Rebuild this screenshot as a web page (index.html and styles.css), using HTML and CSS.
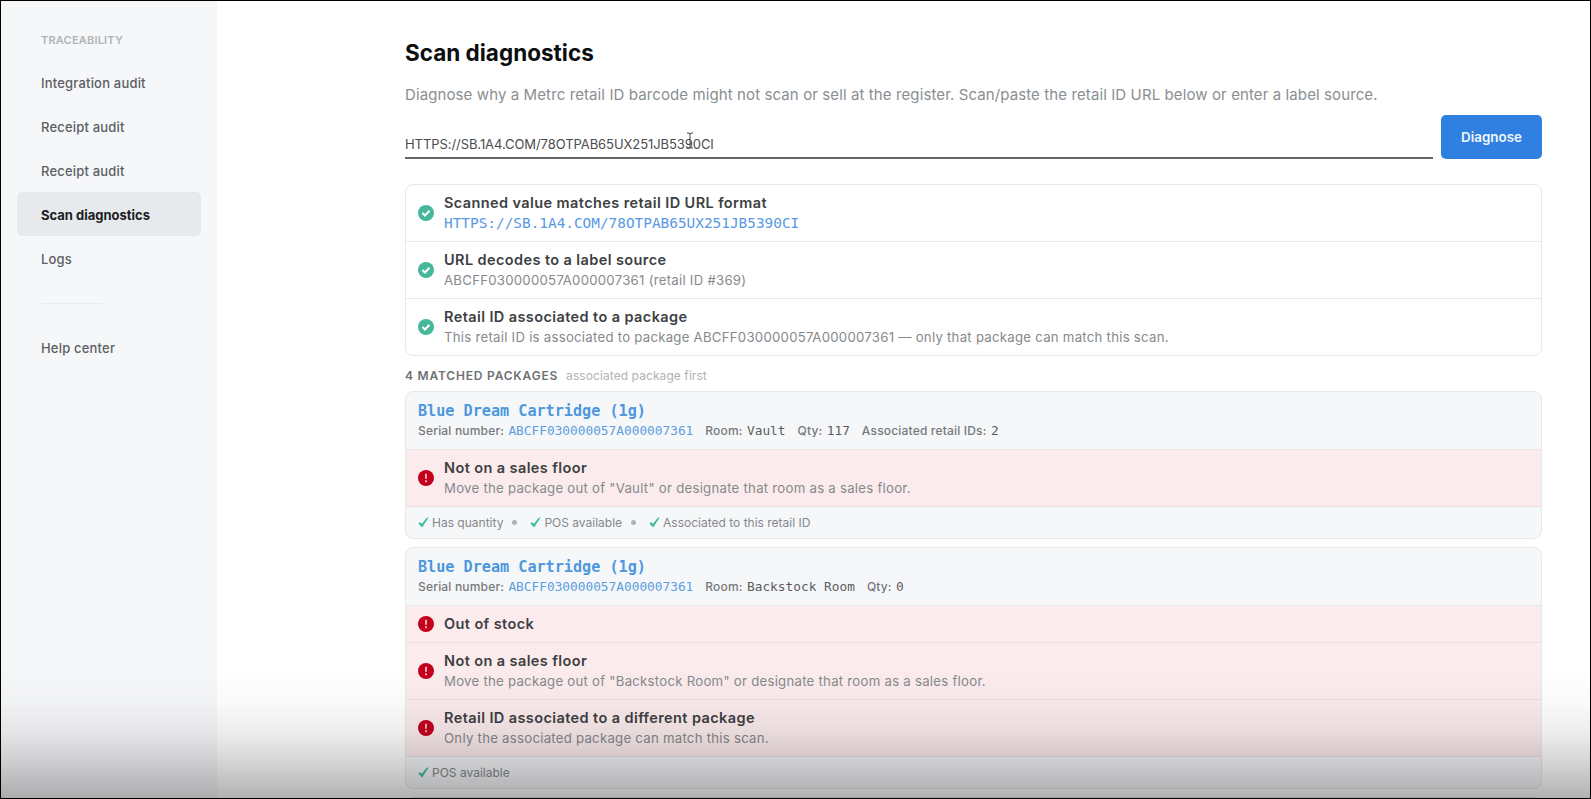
FILE: index.html
```html
<!DOCTYPE html>
<html lang="en">
<head>
    <meta charset="UTF-8">
    <meta name="viewport" content="width=device-width, initial-scale=1.0">
    <title>Scan diagnostics</title>
    <link rel="stylesheet" href="styles.css">
</head>
<body>
    <svg class="icon-defs" width="0" height="0">
        <symbol id="icon-ok" viewBox="0 0 16 16">
            <circle cx="8" cy="8" r="8" fill="#45b79a"/>
            <path d="M4.5 8.1l2.4 2.4 4.6-4.7" fill="none" stroke="#fff" stroke-width="2.1"/>
        </symbol>
        <symbol id="icon-error" viewBox="0 0 16 16">
            <circle cx="8" cy="8" r="8" fill="#c4001d"/>
            <path d="M8 3.8v5M8 10.3v1.9" fill="none" stroke="#f6cdd3" stroke-width="1.7"/>
        </symbol>
        <symbol id="icon-tick" viewBox="0 0 11 11">
            <path d="M0.4 6.5L2.1 5.1l1.6 2L9 0.4l1.5 0.4L4.1 10.6z" fill="#3dbd97"/>
        </symbol>
    </svg>

    <aside class="sidebar">
        <div class="nav-title">TRACEABILITY</div>
        <nav>
            <a class="nav-item">Integration audit</a>
            <a class="nav-item">Receipt audit</a>
            <a class="nav-item">Receipt audit</a>
            <a class="nav-item active">Scan diagnostics</a>
            <a class="nav-item">Logs</a>
        </nav>
        <hr>
        <a class="nav-item">Help center</a>
    </aside>

    <main>
        <h1>Scan diagnostics</h1>
        <p class="intro">Diagnose why a Metrc retail ID barcode might not scan or sell at the register. Scan/paste the retail ID URL below or enter a label source.</p>

        <div class="scan-form">
            <div class="scan-input">
                <span>HTTPS://SB.1A4.COM/78OTPAB65UX251JB5390CI</span>
                <svg class="cursor" viewBox="0 0 8 17" width="8" height="17">
                    <path d="M1 1h2l1 1 1-1h2M4 2v13M1 16h2l1-1 1 1h2" fill="none" stroke="#444" stroke-width="1"/>
                </svg>
            </div>
            <button class="button">Diagnose</button>
        </div>

        <section class="card checks">
            <div class="row">
                <svg class="status"><use href="#icon-ok"/></svg>
                <div>
                    <h3>Scanned value matches retail ID URL format</h3>
                    <p class="mono link">HTTPS://SB.1A4.COM/78OTPAB65UX251JB5390CI</p>
                </div>
            </div>
            <div class="row">
                <svg class="status"><use href="#icon-ok"/></svg>
                <div>
                    <h3>URL decodes to a label source</h3>
                    <p>ABCFF030000057A000007361 (retail ID #369)</p>
                </div>
            </div>
            <div class="row">
                <svg class="status"><use href="#icon-ok"/></svg>
                <div>
                    <h3>Retail ID associated to a package</h3>
                    <p>This retail ID is associated to package ABCFF030000057A000007361 — only that package can match this scan.</p>
                </div>
            </div>
        </section>

        <div class="matched">
            <strong>4 MATCHED PACKAGES</strong>
            <span>associated package first</span>
        </div>

        <section class="card">
            <div class="card-header">
                <h2>Blue Dream Cartridge (1g)</h2>
                <div class="meta">
                    <span>Serial number: <code class="link">ABCFF030000057A000007361</code></span>
                    <span>Room: <code>Vault</code></span>
                    <span>Qty: <code>117</code></span>
                    <span>Associated retail IDs: <code>2</code></span>
                </div>
            </div>
            <div class="row error">
                <svg class="status"><use href="#icon-error"/></svg>
                <div>
                    <h3>Not on a sales floor</h3>
                    <p>Move the package out of "Vault" or designate that room as a sales floor.</p>
                </div>
            </div>
            <div class="card-footer">
                <span class="pass"><svg><use href="#icon-tick"/></svg>Has quantity</span>
                <span class="pass"><svg><use href="#icon-tick"/></svg>POS available</span>
                <span class="pass"><svg><use href="#icon-tick"/></svg>Associated to this retail ID</span>
            </div>
        </section>

        <section class="card">
            <div class="card-header">
                <h2>Blue Dream Cartridge (1g)</h2>
                <div class="meta">
                    <span>Serial number: <code class="link">ABCFF030000057A000007361</code></span>
                    <span>Room: <code>Backstock Room</code></span>
                    <span>Qty: <code>0</code></span>
                </div>
            </div>
            <div class="row error short">
                <svg class="status"><use href="#icon-error"/></svg>
                <div>
                    <h3>Out of stock</h3>
                </div>
            </div>
            <div class="row error">
                <svg class="status"><use href="#icon-error"/></svg>
                <div>
                    <h3>Not on a sales floor</h3>
                    <p>Move the package out of "Backstock Room" or designate that room as a sales floor.</p>
                </div>
            </div>
            <div class="row error">
                <svg class="status"><use href="#icon-error"/></svg>
                <div>
                    <h3>Retail ID associated to a different package</h3>
                    <p>Only the associated package can match this scan.</p>
                </div>
            </div>
            <div class="card-footer">
                <span class="pass"><svg><use href="#icon-tick"/></svg>POS available</span>
            </div>
        </section>

        <hr class="next-card">
    </main>

    <div class="fade"></div>
</body>
</html>
```

FILE: styles.css
```css
* {
    margin: 0;
    padding: 0;
    box-sizing: border-box;
}

body {
    font-family: Inter, 'Liberation Sans', sans-serif;
    background: #fff;
    color: #3d4043;
    height: 799px;
    border: 1px solid #000;
    display: flex;
    overflow: hidden;
    position: relative;
}

.icon-defs {
    position: absolute;
}

/* sidebar */

.sidebar {
    width: 216px;
    flex-shrink: 0;
    background: #f6f7f9;
    padding: 31px 16px 0;
}

.nav-title {
    padding-left: 24px;
    font-size: 11px;
    line-height: 16px;
    font-weight: 600;
    letter-spacing: 0.2px;
    color: #b0b5b8;
    margin-bottom: 12px;
}

.nav-item {
    display: flex;
    align-items: center;
    height: 44px;
    padding: 1px 0 0 24px;
    border-radius: 5px;
    font-size: 13px;
    font-weight: 500;
    letter-spacing: 0.19px;
    color: #5b6063;
}

.nav-item.active {
    width: 184px;
    background: #e6eaec;
    color: #1d2023;
    font-weight: 700;
    letter-spacing: 0;
}

.sidebar hr {
    width: 62px;
    margin: 23px 0 21px 24px;
    border: none;
    border-top: 1px solid #e8eaec;
}

/* main column */

main {
    width: 1137px;
    margin-left: 188px;
    flex-shrink: 0;
}

h1 {
    margin-top: 36px;
    font-size: 22.5px;
    line-height: 32px;
    font-weight: 700;
    color: #0c0d0e;
}

.intro {
    margin-top: 14px;
    font-size: 15px;
    line-height: 24px;
    letter-spacing: 0.105px;
    color: #8a8e91;
    white-space: nowrap;
}

.scan-form {
    display: flex;
    gap: 8px;
    height: 44px;
    margin-top: 8px;
}

.scan-input {
    position: relative;
    flex: 1;
    padding-top: 19px;
    border-bottom: 2px solid #666;
    font-size: 13px;
    line-height: 20px;
    letter-spacing: -0.07px;
    color: #4a4d50;
}

.cursor {
    position: absolute;
    left: 281px;
    top: 17px;
}

.button {
    width: 101px;
    border: none;
    border-radius: 5px;
    background: #3080e2;
    color: #f1f7fe;
    font-family: inherit;
    font-size: 13.4px;
    font-weight: 600;
}

.card {
    border: 1px solid #e6e8ea;
    border-radius: 8px;
    background: #f6f7f9;
    overflow: hidden;
    margin-bottom: 8px;
}

.checks {
    margin-top: 25px;
    margin-bottom: 0;
    background: #fff;
}

.row {
    display: flex;
    align-items: center;
    gap: 10px;
    height: 57px;
    padding-left: 12px;
    border-bottom: 1px solid #e6e8ea;
}

.checks .row {
    padding-bottom: 1px;
}

.checks .row:last-child {
    height: 56px;
    border-bottom: none;
}

.row.error {
    background: #fbebec;
    border-bottom-color: #e9dfe1;
}

.row.short {
    height: 37px;
}

.status {
    width: 16px;
    height: 16px;
}

.row h3 {
    font-size: 14.5px;
    line-height: 20px;
    font-weight: 600;
    letter-spacing: 0.4px;
    color: #3d4043;
}

.row p {
    font-size: 13.2px;
    line-height: 20px;
    letter-spacing: 0.26px;
    color: #85898c;
}

.mono,
code,
h2 {
    font-family: 'DejaVu Sans Mono', monospace;
}

.row p.mono {
    font-size: 14.4px;
    letter-spacing: 0;
}

.link,
.row p.link {
    color: #5898e4;
}

.matched {
    display: flex;
    align-items: center;
    gap: 8px;
    height: 35px;
    padding-top: 4px;
    font-size: 12px;
    letter-spacing: 0.08px;
    color: #b0b3b6;
}

.matched strong {
    font-weight: 600;
    letter-spacing: 0.8px;
    color: #6c7174;
}

.card-header {
    height: 58px;
    padding: 9px 12px 0;
    border-bottom: 1px solid #e6e8ea;
}

h2 {
    font-size: 15.15px;
    line-height: 20px;
    font-weight: 700;
    color: #4c97dd;
}

.meta {
    display: flex;
    gap: 12px;
    font-size: 12px;
    line-height: 20px;
    font-weight: 500;
    letter-spacing: 0.18px;
    color: #76797c;
}

.meta code {
    margin-left: 1px;
    font-size: 12.8px;
    font-weight: 400;
    letter-spacing: 0;
    color: #5a5d60;
}

.meta code.link {
    color: #5a9ee0;
}

.card-footer {
    display: flex;
    align-items: center;
    height: 31px;
    padding-left: 12px;
    font-size: 12px;
    color: #85898c;
}

.pass {
    display: flex;
    align-items: center;
}

.pass svg {
    width: 11px;
    height: 11px;
    margin-right: 3px;
}

.pass + .pass::before {
    content: '';
    width: 5px;
    height: 5px;
    margin: 0 13px 0 9px;
    border-radius: 50%;
    background: #b0b3b6;
}

.next-card {
    margin: 0 6px;
    border: none;
    border-top: 1px solid #e6e8ea;
}

/* dark scrim along the bottom edge */

.fade {
    position: absolute;
    left: 0;
    right: 0;
    bottom: 0;
    height: 130px;
    background: linear-gradient(rgba(0,0,0,0) 0%, rgba(0,0,0,0.02) 25%, rgba(0,0,0,0.07) 49%, rgba(0,0,0,0.15) 68%, rgba(0,0,0,0.3) 100%);
}
```
